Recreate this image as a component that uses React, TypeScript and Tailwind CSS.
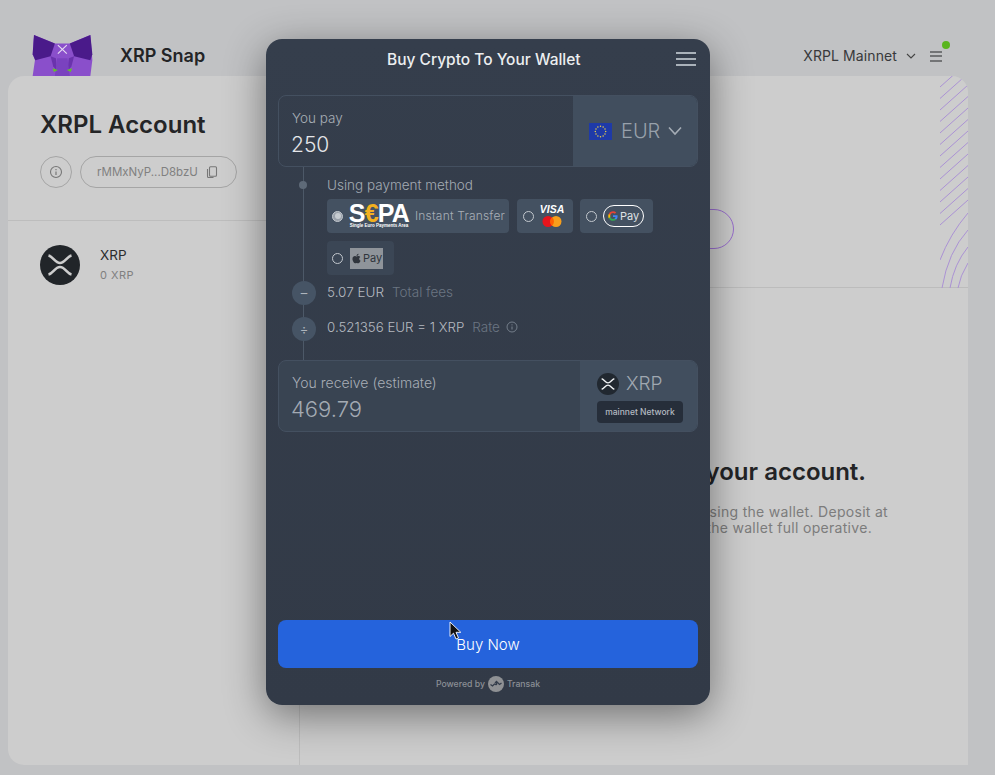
import React from "react";
import { FaApple } from "react-icons/fa";

const XrpMark = ({ size, bg, fg }: { size: number; bg: string; fg: string }) => (
  <svg width={size} height={size} viewBox="0 0 40 40" className="shrink-0">
    <circle cx="20" cy="20" r="20" fill={bg} />
    <path d="M8.500 10.500C13 11.500 15 18 20 18C25 18 27 11.500 31.500 10.500" fill="none" stroke={fg} strokeWidth="2.600" />
    <path d="M8.500 29.500C13 28.500 15 22 20 22C25 22 27 28.500 31.500 29.500" fill="none" stroke={fg} strokeWidth="2.600" />
  </svg>
);

const Fox = () => (
  <svg width="63" height="41" viewBox="36 30 190 123" className="block">
    <polygon points="42,30 105,55 150,55 212,30 218,105 212,153 38,153 45,105 38,88" fill="#8a4fcb" />
    <polygon points="42,30 105,55 92,94 46,106 38,88" fill="#4a1a8a" />
    <polygon points="212,30 150,55 163,94 212,106 218,88" fill="#4a1a8a" />
    <polygon points="92,94 108,100 112,140 100,124" fill="#6a33ad" />
    <polygon points="163,94 147,100 143,140 155,124" fill="#6a33ad" />
    <polygon points="112,100 143,100 150,153 105,153" fill="#7a42bf" />
    <polygon points="98,130 114,135 102,141" fill="#62c02a" />
    <polygon points="157,130 141,135 153,141" fill="#62c02a" />
    <path d="M114 60L141 86M141 60L114 86" stroke="#e6dcf2" strokeWidth="3.500" />
  </svg>
);

const Pattern = () => {
  const ends = Array.from({ length: 14 }, (_, i) => 9 + (i - 3) * 11.500);
  return (
    <svg width="28" height="212" viewBox="0 0 28 212" className="block">
      {ends.map((y) => (
        <path key={y} d={`M0 ${y + 25}L28 ${y}`} stroke="#ab92d4" strokeWidth="1" fill="none" />
      ))}
      <path d="M0 184Q10 158 28 137" stroke="#ab92d4" strokeWidth="1" fill="none" />
      <path d="M2 212Q8 176 28 154" stroke="#ab92d4" strokeWidth="1" fill="none" />
      <path d="M10 212Q14 188 28 171" stroke="#ab92d4" strokeWidth="1" fill="none" />
      <path d="M18 212Q20 200 28 187" stroke="#ab92d4" strokeWidth="1" fill="none" />
    </svg>
  );
};

const Radio = ({ on }: { on?: boolean }) => (
  <span className={`flex h-[11px] w-[11px] shrink-0 items-center justify-center rounded-full border border-[#c3c8ce] ${on ? "bg-[#9aa1aa]" : ""}`}>
    {on && <span className="h-[6px] w-[6px] rounded-full bg-[#c7ccd1]" />}
  </span>
);

const Flag = () => (
  <svg width="23" height="17" viewBox="0 0 23 17" className="shrink-0">
    <rect width="23" height="17" fill="#1e3aa8" />
    {Array.from({ length: 12 }, (_, i) => (
      <circle key={i} cx={11.500 + 5.200 * Math.cos((i * Math.PI) / 6)} cy={8.500 + 5.200 * Math.sin((i * Math.PI) / 6)} r="0.750" fill="#e8cf4a" />
    ))}
  </svg>
);

const GLogo = () => (
  <svg width="10" height="10" viewBox="0 0 24 24">
    <path d="M23 12.300c0-.8-.1-1.600-.2-2.300H12v4.400h6.200c-.3 1.400-1.100 2.600-2.300 3.400v2.800h3.700C21.800 18.600 23 15.700 23 12.300z" fill="#4285f4" />
    <path d="M12 23.500c3.100 0 5.700-1 7.600-2.800l-3.700-2.900c-1 .7-2.300 1.100-3.900 1.100-3 0-5.500-2-6.400-4.700H1.800v2.900C3.700 20.900 7.600 23.500 12 23.500z" fill="#34a853" />
    <path d="M5.600 14.200c-.5-1.400-.5-3 0-4.400V6.900H1.800c-1.600 3.200-1.600 7 0 10.200l3.800-2.900z" fill="#fbbc04" />
    <path d="M12 5c1.700 0 3.200.6 4.400 1.700l3.300-3.300C17.700 1.500 15 .5 12 .5 7.600.5 3.700 3.100 1.800 6.900l3.800 2.900C6.500 7 9 5 12 5z" fill="#ea4335" />
  </svg>
);

export default function App() {
  return (
    <div className="relative h-[775px] w-[995px] overflow-hidden bg-[#c1c2c4] font-['Inter',sans-serif]">
      {/* page header */}
      <header className="flex h-[76px] items-end pl-[32px] pr-[53px]">
        <Fox />
        <span className="mb-[9px] ml-[25px] text-[18px] font-semibold leading-[22px] text-[#232426]">XRP Snap</span>
        <div className="mb-[11px] ml-auto flex items-center">
          <span className="text-[14px] leading-[18px] tracking-[0.1px] text-[#38393b]">XRPL Mainnet</span>
          <svg width="10" height="6" viewBox="0 0 10 6" className="ml-[9px]">
            <path d="M1 1l4 4 4-4" fill="none" stroke="#444" strokeWidth="1.100" />
          </svg>
          <div className="relative ml-[14px] flex w-[12px] flex-col gap-[2.5px]">
            <span className="h-[2px] bg-[#737476]" />
            <span className="h-[2px] bg-[#737476]" />
            <span className="h-[2px] bg-[#737476]" />
            <span className="absolute left-[12px] top-[-10px] h-[8px] w-[8px] rounded-full bg-[#5ab51f]" />
          </div>
        </div>
      </header>

      {/* card */}
      <main className="ml-[8px] flex h-[689px] w-[960px] overflow-hidden rounded-l-[16px] rounded-tr-[16px] bg-[#cdcdcd]">
        <aside className="w-[292px] shrink-0 border-r border-[#bdbdbd]">
          <div className="h-[145px] border-b border-[#bdbdbd] pl-[32px] pt-[33px]">
            <h1 className="text-[24px] font-semibold leading-[32px] text-[#242527]">XRPL Account</h1>
            <div className="mt-[15px] flex gap-[8px]">
              <span className="flex h-[32px] w-[32px] items-center justify-center rounded-full border border-[#a5a5a5]">
                <svg width="14" height="14" viewBox="0 0 14 14">
                  <circle cx="7" cy="7" r="5.500" fill="none" stroke="#777" strokeWidth="1.100" />
                  <path d="M7 6.500v3.500M7 4v1.300" stroke="#777" strokeWidth="1.200" />
                </svg>
              </span>
              <span className="flex h-[32px] w-[157px] items-center gap-[8px] rounded-full border border-[#a5a5a5] pl-[16px]">
                <span className="text-[11.5px] leading-[16px] text-[#808080]">rMMxNyP...D8bzU</span>
                <svg width="12" height="12" viewBox="0 0 12 12">
                  <rect x="3.500" y="0.800" width="7" height="9.400" rx="1" fill="none" stroke="#777" strokeWidth="1.100" />
                  <path d="M1.500 3v7.500a1 1 0 0 0 1 1h5" fill="none" stroke="#777" strokeWidth="1.100" />
                </svg>
              </span>
            </div>
          </div>
          <div className="flex items-center gap-[20px] pl-[32px] pt-[24px]">
            <XrpMark size={40} bg="#212529" fg="#cdcdcd" />
            <div className="mb-[2px]">
              <div className="text-[13.5px] leading-[18px] text-[#2a2b2d]">XRP</div>
              <div className="mt-[3px] text-[11px] leading-[16px] tracking-[0.5px] text-[#808080]">0 XRP</div>
            </div>
          </div>
        </aside>
        <section className="flex-1">
          <div className="relative flex h-[212px] items-end justify-end border-b border-[#bcbcbc] pb-[38px] pr-[234px]">
            <span className="h-[40px] w-[120px] rounded-full border border-[#9a6fd0]" />
            <div className="absolute right-0 top-0 overflow-hidden rounded-tr-[16px]">
              <Pattern />
            </div>
          </div>
          <div className="pt-[168px] text-right">
            <h2 className="pr-[102px] text-[24px] font-semibold leading-[32px] text-[#232426]">your account.</h2>
            <p className="mt-[16px] pr-[80px] text-[14px] leading-[16px] tracking-[0.3px] text-[#7c7c7c]">using the wallet. Deposit at</p>
            <p className="pr-[96px] text-[14px] leading-[16px] tracking-[0.3px] text-[#7c7c7c]">the wallet full operative.</p>
          </div>
        </section>
      </main>

      {/* modal */}
      <div className="absolute left-[266px] top-[39px] flex h-[666px] w-[444px] flex-col rounded-[16px] bg-linear-to-b from-[#353e4c] to-[#323a47] px-[12px] shadow-[0_10px_40px_rgba(0,0,0,0.45)]">
        <div className="flex h-[40px] items-center justify-between pl-[109px] pr-[2px]">
          <span className="pt-px text-[15.5px] font-medium leading-[22px] text-[#eceef0]">Buy Crypto To Your Wallet</span>
          <span className="flex w-[20px] flex-col gap-[4px]">
            <span className="h-[2px] bg-[#aab2ba]" />
            <span className="h-[2px] bg-[#aab2ba]" />
            <span className="h-[2px] bg-[#aab2ba]" />
          </span>
        </div>

        <div className="mt-[16px] flex h-[72px] overflow-hidden rounded-[8px] border border-[#445060]">
          <div className="flex-1 pl-[13px] pt-[13px]">
            <div className="text-[13.5px] font-light leading-[18px] text-[#a8aeb6]">You pay</div>
            <div className="-ml-px mt-[4px] text-[21px] font-light leading-[28px] text-[#e4e6e9]">250</div>
          </div>
          <div className="flex w-[124px] items-center bg-[#414e5e] pl-[16px]">
            <Flag />
            <span className="ml-[9px] text-[20px] font-light leading-[26px] text-[#98a1ab]">EUR</span>
            <svg width="16" height="10" viewBox="0 0 16 10" className="ml-[7px]">
              <path d="M2 1.500l6 6.500 6-6.500" fill="none" stroke="#a4acb5" strokeWidth="1.600" />
            </svg>
          </div>
        </div>

        <div className="relative h-[193px]">
          <span className="absolute bottom-0 left-[25px] top-0 w-px bg-[#4d5968]" />
          <div className="flex pt-[8px]">
            <div className="relative w-[49px] shrink-0 pl-[21px] pt-[6px]">
              <span className="block h-[8px] w-[8px] rounded-full bg-[#5e6a78]" />
            </div>
            <div>
              <div className="text-[13.5px] font-light leading-[20px] text-[#a4abb3]">Using payment method</div>
              <div className="mt-[4px] flex w-[340px] flex-wrap gap-x-[8px] gap-y-[8px]">
                <div className="flex h-[34px] w-[182px] items-center rounded-[4px] bg-[#445161] pl-[5px]">
                  <Radio on />
                  <div className="ml-[5px] flex w-[62px] flex-col items-center">
                    <span className="font-['Liberation_Sans',sans-serif] text-[25px] font-bold leading-[19px] tracking-[-0.8px] text-white">
                      S<span className="text-[#f2b01e]">€</span>PA
                    </span>
                    <span className="whitespace-nowrap font-['Liberation_Sans',sans-serif] text-[4.5px] font-bold leading-[5px] text-white">Single Euro Payments Area</span>
                  </div>
                  <span className="ml-[5px] whitespace-nowrap text-[12px] font-light leading-[16px] tracking-[0.2px] text-[#a8afb7]">Instant Transfer</span>
                </div>
                <div className="flex h-[34px] w-[56px] items-center rounded-[4px] bg-[#445161] pl-[6px]">
                  <Radio />
                  <div className="ml-[5px] flex w-[26px] flex-col items-center">
                    <span className="font-['Liberation_Sans',sans-serif] text-[10.5px] font-bold italic leading-[11px] text-white">VISA</span>
                    <svg width="20" height="13" viewBox="0 0 20 12">
                      <circle cx="6" cy="6" r="5.500" fill="#e8141c" />
                      <circle cx="14" cy="6" r="5.500" fill="#f79e1b" />
                      <path d="M10 1.800a5.500 5.500 0 0 1 0 8.400a5.500 5.500 0 0 1 0-8.400z" fill="#ff5f00" />
                    </svg>
                  </div>
                </div>
                <div className="-ml-px flex h-[34px] w-[73px] items-center rounded-[4px] bg-[#445161] pl-[6px]">
                  <Radio />
                  <span className="ml-[6px] flex h-[22px] w-[41px] items-center justify-center gap-[2px] rounded-full border border-white">
                    <GLogo />
                    <span className="text-[11px] leading-[14px] text-[#dfe2e5]">Pay</span>
                  </span>
                </div>
                <div className="flex h-[34px] w-[67px] items-center rounded-[4px] bg-[#3b4655] pl-[5px]">
                  <Radio />
                  <span className="ml-[7px] flex h-[21px] w-[33px] items-center justify-center gap-[1px] bg-[#8f949a] text-[#30353c]">
                    <FaApple className="text-[11px]" />
                    <span className="text-[11px] leading-[14px]">Pay</span>
                  </span>
                </div>
              </div>
            </div>
          </div>

          <div className="mt-[6px] flex items-center">
            <div className="relative w-[49px] shrink-0 pl-[14px]">
              <span className="flex h-[24px] w-[24px] items-center justify-center rounded-full bg-[#465465] text-[13px] leading-none text-[#aeb5bd]">–</span>
            </div>
            <span className="mb-[2px] text-[13.5px] font-light leading-[18px] text-[#b4b9c0]">5.07 EUR</span>
            <span className="mb-[2px] ml-[8px] text-[13.5px] font-light leading-[18px] text-[#6b7582]">Total fees</span>
          </div>

          <div className="mt-[12px] flex items-center">
            <div className="relative w-[49px] shrink-0 pl-[14px]">
              <span className="flex h-[24px] w-[24px] items-center justify-center rounded-full bg-[#465465] text-[13px] leading-none text-[#aeb5bd]">÷</span>
            </div>
            <span className="mb-[4px] text-[13.3px] font-light leading-[18px] text-[#b4b9c0]">0.521356 EUR = 1 XRP</span>
            <span className="mb-[4px] ml-[8px] text-[13.5px] font-light leading-[18px] text-[#6b7582]">Rate</span>
            <svg width="12" height="12" viewBox="0 0 12 12" className="mb-[4px] ml-[6px]">
              <circle cx="6" cy="6" r="5" fill="none" stroke="#7b8591" strokeWidth="0.900" />
              <path d="M6 5.500v3M6 3.300v1.100" stroke="#7b8591" strokeWidth="1" />
            </svg>
          </div>
        </div>

        <div className="flex h-[72px] overflow-hidden rounded-[8px] border border-[#445060] bg-[#394452]">
          <div className="flex-1 pl-[13px] pt-[13px]">
            <div className="text-[14px] font-light leading-[18px] text-[#a8aeb6]">You receive (estimate)</div>
            <div className="-ml-px mt-[3px] text-[22px] font-light leading-[28px] text-[#a3aab3]">469.79</div>
          </div>
          <div className="flex w-[117px] flex-col bg-[#414e5e] pl-[17px] pt-[11px]">
            <div className="flex items-center gap-[7px]">
              <XrpMark size={22} bg="#212830" fg="#eef0f2" />
              <span className="pt-px text-[19px] font-light leading-[22px] text-[#a0a8b1]">XRP</span>
            </div>
            <span className="mt-[6px] flex h-[22px] w-[86px] items-center justify-center rounded-[4px] bg-[#262e3a] text-[8.5px] font-medium leading-[12px] text-[#b4bac1]">mainnet Network</span>
          </div>
        </div>

        <button className="mt-auto h-[48px] rounded-[8px] bg-[#2563dc] pt-px text-[15px] font-light leading-[22px] text-white">Buy Now</button>
        <div className="mb-[5px] flex h-[32px] items-center justify-center">
          <span className="text-[8.7px] font-medium leading-[12px] text-[#8b8f95]">Powered by</span>
          <svg width="16" height="16" viewBox="0 0 16 16" className="mx-[3px]">
            <circle cx="8" cy="8" r="8" fill="#8f9194" />
            <path d="M2.500 8.500l2 1.500 2-2 2 1M8.500 9V5.500M7 7l1.500-1.500L10 7M10 7l1.500 1.500L13.500 7" fill="none" stroke="#343d4b" strokeWidth="1.300" />
          </svg>
          <span className="text-[8.7px] font-medium leading-[12px] text-[#8b8f95]">Transak</span>
        </div>
      </div>

      {/* mouse pointer */}
      <svg width="13" height="19" viewBox="0 0 13 19" className="absolute left-[449px] top-[621px]">
        <path d="M1 1v14.500l3.500-3.300 2.500 5.800 2.500-1-2.500-5.700h4.800z" fill="#111" stroke="#fff" strokeWidth="0.900" />
      </svg>
    </div>
  );
}
